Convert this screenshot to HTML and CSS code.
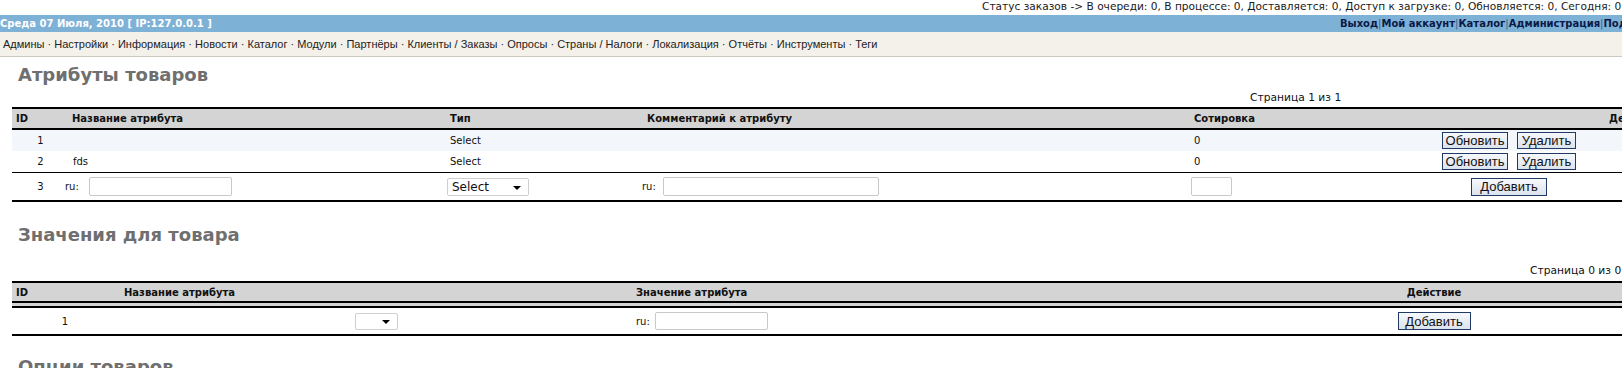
FILE: index.html
```html
<!DOCTYPE html>
<html lang="ru">
<head>
    <meta charset="UTF-8">
    <title>Атрибуты товаров</title>
    <link rel="stylesheet" href="styles.css">
</head>
<body>
<div class="page">
    <div class="status">Статус заказов -&gt; В очереди: 0, В процессе: 0, Доставляется: 0, Доступ к загрузке: 0, Обновляется: 0, Сегодня: 0</div>

    <div class="topbar">
        <div class="date">Среда 07 Июля, 2010 [ IP:127.0.0.1 ]</div>
        <div class="usernav"><a href="#">Выход</a><span>|</span><a href="#">Мой аккаунт</a><span>|</span><a href="#">Каталог</a><span>|</span><a href="#">Администрация</a><span>|</span><a href="#">Поддержка</a></div>
    </div>

    <div class="menu">
        <a href="#">Админы</a> · <a href="#">Настройки</a> · <a href="#">Информация</a> · <a href="#">Новости</a> · <a href="#">Каталог</a> · <a href="#">Модули</a> · <a href="#">Партнёры</a> · <a href="#">Клиенты / Заказы</a> · <a href="#">Опросы</a> · <a href="#">Страны / Налоги</a> · <a href="#">Локализация</a> · <a href="#">Отчёты</a> · <a href="#">Инструменты</a> · <a href="#">Теги</a>
    </div>

    <!-- Атрибуты -->
    <h1 class="title title-first">Атрибуты товаров</h1>
    <div class="pager pager-attr">Страница 1 из 1</div>
    <table class="grid grid-attr">
        <colgroup>
            <col class="c-id"><col class="c-name"><col class="c-type"><col class="c-comment"><col class="c-sort"><col class="c-action">
        </colgroup>
        <thead>
            <tr>
                <th class="th-id">ID</th>
                <th class="th-name">Название атрибута</th>
                <th class="th-type">Тип</th>
                <th class="th-comment">Комментарий к атрибуту</th>
                <th class="th-sort">Сотировка</th>
                <th class="th-action">Действие</th>
            </tr>
        </thead>
        <tbody>
            <tr class="odd">
                <td class="id">1</td>
                <td class="name"></td>
                <td class="type">Select</td>
                <td></td>
                <td class="sort">0</td>
                <td class="action"><div class="buttons"><button class="btn-update">Обновить</button><button class="btn-delete">Удалить</button></div></td>
            </tr>
            <tr class="even">
                <td class="id">2</td>
                <td class="name">fds</td>
                <td class="type">Select</td>
                <td></td>
                <td class="sort">0</td>
                <td class="action"><div class="buttons"><button class="btn-update">Обновить</button><button class="btn-delete">Удалить</button></div></td>
            </tr>
            <tr class="add-row">
                <td class="id">3</td>
                <td class="name-edit"><label>ru:</label><input type="text" class="inp-name"></td>
                <td class="type-edit"><span class="select-wrap"><select class="sel-type"><option>Select</option></select></span></td>
                <td class="comment-edit"><label>ru:</label><input type="text" class="inp-comment"></td>
                <td class="sort-edit"><input type="text" class="inp-sort"></td>
                <td class="add"><button class="btn-add">Добавить</button></td>
            </tr>
        </tbody>
    </table>

    <!-- Значения -->
    <h1 class="title title-values">Значения для товара</h1>
    <div class="pager pager-values">Страница 0 из 0</div>
    <table class="grid grid-values">
        <colgroup>
            <col class="v-id"><col class="v-name"><col class="v-select"><col class="v-value"><col class="v-action"><col class="v-rest">
        </colgroup>
        <thead>
            <tr>
                <th class="th-id">ID</th>
                <th class="th-vname">Название атрибута</th>
                <th></th>
                <th class="th-value">Значение атрибута</th>
                <th class="th-vaction">Действие</th>
                <th></th>
            </tr>
        </thead>
        <tbody>
            <tr class="add-row">
                <td class="vid">1</td>
                <td></td>
                <td class="vsel"><span class="select-wrap"><select class="sel-small"><option></option></select></span></td>
                <td class="value-edit"><label>ru:</label><input type="text" class="inp-value"></td>
                <td class="vadd"><button class="btn-add btn-add-small">Добавить</button></td>
                <td></td>
            </tr>
        </tbody>
    </table>

    <h1 class="title title-options">Опции товаров</h1>
</div>
</body>
</html>
```

FILE: styles.css
```css
body {
    margin: 0;
    font-family: "DejaVu Sans", Verdana, sans-serif;
    font-size: 10px;
    color: #111;
    background: #fff;
}
.page {
    width: 100%;
    overflow: hidden;
}
a {
    color: inherit;
    text-decoration: none;
}

/* top lines */
.status {
    height: 15px;
    line-height: 13px;
    padding-left: 982px;
    white-space: nowrap;
    font-size: 10.6px;
    color: #1a1a1a;
}
.topbar {
    display: flex;
    align-items: center;
    height: 17px;
    background-color: #7eb1d6;
    white-space: nowrap;
}
.date {
    width: 1340px;
    flex-shrink: 0;
    color: #fff;
    font-weight: bold;
    font-size: 10px;
}
.usernav {
    color: #0b1a48;
    font-weight: bold;
    font-size: 10px;
}
.usernav span {
    color: #3d5f8c;
    font-weight: normal;
}
.menu {
    height: 24px;
    line-height: 24px;
    padding-left: 3px;
    background-color: #f4f1eb;
    border-bottom: 1px solid #cdc9c0;
    font-family: "Liberation Sans", Arial, sans-serif;
    font-size: 11px;
    color: #222;
    white-space: nowrap;
}

/* section titles */
.title {
    margin: 0 0 0 18px;
    font-size: 18px;
    line-height: 22px;
    color: #6f6f6f;
    font-weight: bold;
}
.title-first {
    margin-top: 7px;
}
.title-values {
    margin-top: 22px;
}
.title-options {
    margin-top: 20px;
}
.pager {
    height: 12px;
    line-height: 12px;
    margin-top: 6px;
    margin-bottom: 3px;
    white-space: nowrap;
    font-size: 10.7px;
}
.pager-attr {
    padding-left: 1250px;
}
.pager-values {
    margin-top: 19px;
    margin-bottom: 4px;
    padding-left: 1530px;
}

/* grids */
.grid {
    margin-left: 12px;
    width: 1648px;
    table-layout: fixed;
    border-collapse: separate;
    border-spacing: 0;
    font-size: 10px;
}
.grid th {
    height: 19px;
    padding: 0;
    background-color: #d4d4d4;
    text-align: left;
    font-weight: bold;
    border-top: 2px solid #000;
    border-bottom: 2px solid #000;
    white-space: nowrap;
    overflow: visible;
}
.grid td {
    padding: 0;
    white-space: nowrap;
}
.grid tr.odd td {
    height: 21px;
    background-color: #f3f6fb;
}
.grid tr.even td {
    height: 21px;
}
.grid tr.add-row td {
    height: 27px;
    border-top: 1px solid #000;
    border-bottom: 2px solid #000;
}
.grid td.id {
    text-align: center;
    padding-left: 5px;
}

.c-id { width: 52px; }
.c-name { width: 380px; }
.c-type { width: 188px; }
.c-comment { width: 556px; }
.c-sort { width: 212px; }
.c-action { width: 260px; }

.th-id { padding-left: 4px !important; }
.th-name { padding-left: 8px !important; }
.th-type { padding-left: 6px !important; }
.th-comment { padding-left: 15px !important; }
.th-sort { padding-left: 6px !important; }
.th-action { padding-left: 209px !important; }

.grid td.name { padding-left: 9px; }
.grid td.type { padding-left: 6px; }
.grid td.sort { padding-left: 6px; }
.grid td.action { padding-left: 42px; }
.grid td.name-edit { padding-left: 1px; }
.grid td.type-edit { padding-left: 3px; }
.grid td.comment-edit { padding-left: 10px; }
.grid td.sort-edit { padding-left: 3px; }
.grid td.add { padding-left: 71px; }

.grid-values th {
    height: 18px;
    border-bottom: 7px double #000;
}
.grid-values tr.add-row td {
    height: 26px;
    border-top: 0;
}
.v-id { width: 106px; }
.v-name { width: 232px; }
.v-select { width: 280px; }
.v-value { width: 710px; }
.v-action { width: 188px; }
.v-rest { width: 132px; }
.th-vname { padding-left: 6px !important; }
.th-value { padding-left: 6px !important; }
.th-vaction { text-align: center !important; }
.grid td.vid { text-align: center; }
.grid td.vsel { padding-left: 5px; }
.grid td.value-edit { padding-left: 6px; }
.grid td.vadd { text-align: center; }

/* form controls */
label {
    display: inline-block;
    vertical-align: middle;
}
.name-edit label {
    margin-right: 10px;
}
.comment-edit label {
    margin-right: 7px;
}
.value-edit label {
    margin-right: 5px;
}
input[type="text"] {
    box-sizing: border-box;
    height: 19px;
    border: 1px solid #c9c9c9;
    border-radius: 2px;
    padding: 0 3px;
    vertical-align: middle;
    font: 11px "DejaVu Sans", sans-serif;
}
.inp-name { width: 143px; }
.inp-comment { width: 216px; }
.inp-sort { width: 41px; }
.inp-value { width: 113px; height: 18px !important; }

.select-wrap {
    position: relative;
    display: inline-block;
    vertical-align: middle;
}
.select-wrap::after {
    content: "";
    position: absolute;
    right: 8px;
    top: 50%;
    margin-top: -1px;
    border-left: 4px solid transparent;
    border-right: 4px solid transparent;
    border-top: 4px solid #000;
    pointer-events: none;
}
select {
    -webkit-appearance: none;
    appearance: none;
    box-sizing: border-box;
    border: 1px solid #cfcfcf;
    border-radius: 2px;
    background: #fff;
    color: #111;
    padding: 0 4px;
    margin: 0;
    display: block;
}
.sel-type {
    width: 82px;
    height: 18px;
    font: 12px "DejaVu Sans", sans-serif;
    line-height: 16px;
}
.sel-small {
    width: 43px;
    height: 17px;
    font-size: 10px;
}

.buttons {
    display: flex;
    gap: 9px;
}
button {
    box-sizing: border-box;
    height: 17px;
    padding: 0 2px;
    margin: 0;
    border: 1px solid #1f3a66;
    border-radius: 0;
    background: linear-gradient(#f6f8fb, #dce3ed);
    color: #111;
    font: 13px "Liberation Sans", Arial, sans-serif;
    line-height: 15px;
    vertical-align: middle;
}
.btn-update {
    width: 66px;
}
.btn-delete {
    width: 59px;
}
.btn-add {
    width: 76px;
    height: 18px;
}
.btn-add-small {
    width: 73px;
}
```
